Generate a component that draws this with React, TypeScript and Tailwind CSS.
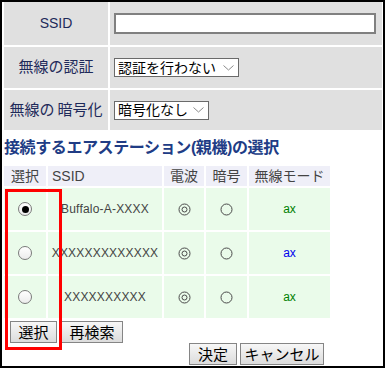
import { Fragment } from "react";

const rows = [
  { ssid: "Buffalo-A-XXXX", checked: true, mode: "text-[#008000]" },
  { ssid: "XXXXXXXXXXXXX", checked: false, mode: "text-[#0000ee]" },
  { ssid: "XXXXXXXXXX", checked: false, mode: "text-[#008000]" },
];

function Chevron() {
  return (
    <svg width="11" height="6" viewBox="0 0 11 6" className="shrink-0">
      <polyline points="0.5,0.5 5.5,5 10.5,0.5" fill="none" stroke="#8a8a8a" strokeWidth="1" />
    </svg>
  );
}

function FakeSelect({ label, width }: { label: string; width: string }) {
  return (
    <div className={`${width} h-[19px] border border-[#6a6a6a] bg-white flex items-center justify-between pl-[3px] pr-[4px]`}>
      <span className="text-[14px] leading-none text-black">{label}</span>
      <Chevron />
    </div>
  );
}

function Radio({ checked }: { checked: boolean }) {
  return (
    <span className="w-[14px] h-[14px] rounded-full border border-[#7a7a7a] bg-gradient-to-b from-[#ffffff] to-[#ececec] flex items-center justify-center">
      {checked && <span className="w-[7px] h-[7px] rounded-full bg-black" />}
    </span>
  );
}

function Mark({ double }: { double: boolean }) {
  return (
    <svg width="13" height="13" viewBox="0 0 13 13">
      <circle cx="6.5" cy="6.5" r="5.5" fill="none" stroke="#4a4a4a" strokeWidth="1" />
      {double && <circle cx="6.5" cy="6.5" r="2.5" fill="none" stroke="#4a4a4a" strokeWidth="1" />}
    </svg>
  );
}

function Btn({ children, width }: { children: string; width: string }) {
  return (
    <button className={`${width} h-[22px] border border-[#858585] bg-gradient-to-b from-[#f7f7f7] to-[#dcdcdc] text-[15px] leading-none text-black flex items-center justify-center`}>
      {children}
    </button>
  );
}

export default function App() {
  const label = "bg-[#e0e0e0] flex items-center justify-center text-[15px] text-[#1e2a5a]";
  const value = "bg-[#e0e0e0] flex items-center pl-[4px]";
  const head = "bg-[#efeff8] flex items-center text-[14px] text-[#444444]";
  const cell = "bg-[#eafbea] flex items-center justify-center";

  return (
    <div className="w-[385px] h-[369px] bg-white font-['Liberation_Sans','Noto_Sans_CJK_JP',sans-serif]">
      <div className="relative w-[385px] h-[368px] border-2 border-black pl-[2px]">
        <div className="grid grid-cols-[104px_272px] grid-rows-[43px_41px_40px] gap-[2px] bg-white">
          <div className={label}>
            <span className="text-[14px]">SSID</span>
          </div>
          <div className={value}>
            <input type="text" readOnly className="w-[262px] h-[21px] border-2 border-[#808080] bg-white outline-none" />
          </div>
          <div className={label}>無線の認証</div>
          <div className={value}>
            <FakeSelect label="認証を行わない" width="w-[125px]" />
          </div>
          <div className={label}>
            無線の<span className="ml-[3px]">暗号化</span>
          </div>
          <div className={value}>
            <FakeSelect label="暗号化なし" width="w-[95px]" />
          </div>
        </div>

        <h2 className="mt-[8px] h-[20px] text-[16px] leading-[20px] font-bold text-[#203c85] tracking-[-0.4px] whitespace-nowrap">
          接続するエアステーション(親機)の選択
        </h2>

        <div className="mt-[8px] w-[326px] grid grid-cols-[42px_114px_40px_41px_81px] grid-rows-[20px_42px_42px_42px] gap-[2px]">
          <div className={`${head} justify-center`}>選択</div>
          <div className={`${head} pl-[4px]`}>SSID</div>
          <div className={`${head} justify-center`}>電波</div>
          <div className={`${head} justify-center`}>暗号</div>
          <div className={`${head} justify-center`}>無線モード</div>
          {rows.map((r, i) => (
            <Fragment key={i}>
              <div className={cell}>
                <Radio checked={r.checked} />
              </div>
              <div className={`${cell} text-[12px] text-[#444444] tracking-[0.2px]`}>{r.ssid}</div>
              <div className={cell}>
                <Mark double />
              </div>
              <div className={cell}>
                <Mark double={false} />
              </div>
              <div className={`${cell} text-[12px] ${r.mode}`}>ax</div>
            </Fragment>
          ))}
        </div>

        <div className="mt-[3px] flex gap-[4px] pl-[6px]">
          <Btn width="w-[47px]">選択</Btn>
          <Btn width="w-[62px]">再検索</Btn>
        </div>
        <div className="flex gap-[3px] pl-[185px]">
          <Btn width="w-[48px]">決定</Btn>
          <Btn width="w-[84px]">キャンセル</Btn>
        </div>

        <div className="absolute left-[3px] top-[187px] w-[57px] h-[161px] border-[3px] border-[#ff0000]" />
      </div>
    </div>
  );
}
